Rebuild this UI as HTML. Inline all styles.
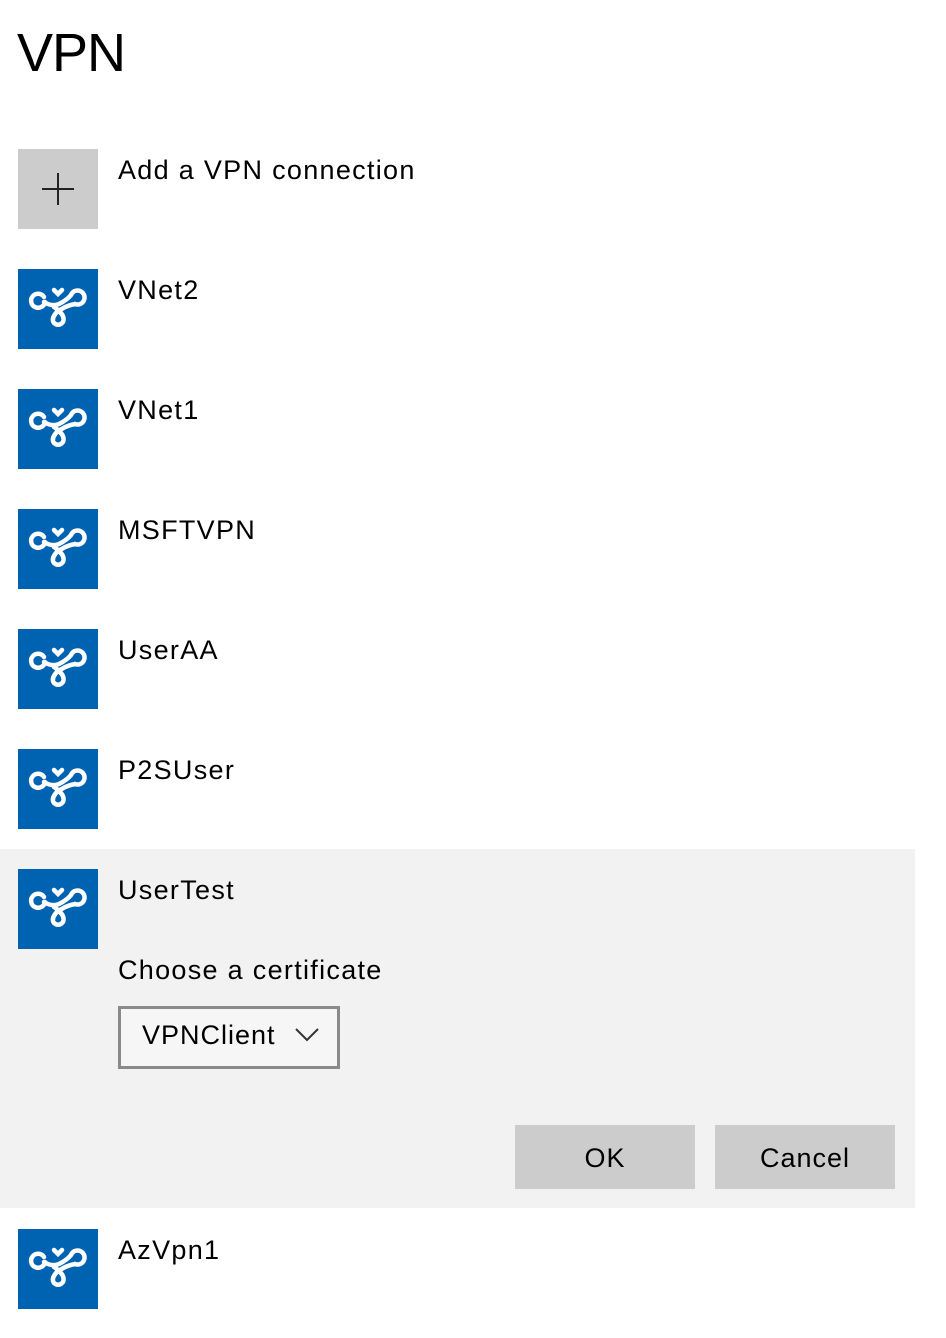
<!DOCTYPE html>
<html><head><style>
body{margin:0;width:946px;height:1338px;background:#fff;font-family:"Liberation Sans",sans-serif;color:#000;position:relative;overflow:hidden}
.a{position:absolute}
.ic{position:absolute;left:18px;width:80px;height:80px;background:#0063b1}
.t{position:absolute;left:118px;font-size:27px;letter-spacing:1.3px}
.btn{position:absolute;top:1125px;width:180px;height:64px;background:#ccc;font-size:27px;text-align:center;line-height:66px;letter-spacing:1px}
</style></head><body>
<div class="a" style="left:17px;top:22px;font-size:54px;letter-spacing:-1px">VPN</div>
<div class="a" style="left:18px;top:149px;width:80px;height:80px;background:#ccc"></div>
<div class="a" style="left:42px;top:188px;width:32px;height:2px;background:#222"></div>
<div class="a" style="left:57px;top:173px;width:2px;height:32px;background:#222"></div>
<div class="t" style="top:155px">Add a VPN connection</div>
<div class="a" style="left:0;top:849px;width:915px;height:359px;background:#f2f2f2"></div>
<svg width="0" height="0" style="position:absolute"><defs><g id="v" fill="none" stroke="#fff" stroke-width="4.5" stroke-linecap="round">
<path d="M27 33 A7 7 0 1 1 26 28"/>
<path d="M26 33 Q34 38 41 35 Q49 31 53 26"/>
<path d="M53 26 A7 7 0 1 1 57 35"/>
<path d="M57 35 Q46 37 38 44 Q33 50 36 54 Q41 58 45 53 Q47 48 42 43 Q38 39 36 38"/>
<path d="M36 21 L40 25 L44 21"/></g></defs></svg>
<div class="ic" style="top:269px"><svg width="80" height="80"><use href="#v"/></svg></div>
<div class="t" style="top:275px">VNet2</div>
<div class="ic" style="top:389px"><svg width="80" height="80"><use href="#v"/></svg></div>
<div class="t" style="top:395px">VNet1</div>
<div class="ic" style="top:509px"><svg width="80" height="80"><use href="#v"/></svg></div>
<div class="t" style="top:515px">MSFTVPN</div>
<div class="ic" style="top:629px"><svg width="80" height="80"><use href="#v"/></svg></div>
<div class="t" style="top:635px">UserAA</div>
<div class="ic" style="top:749px"><svg width="80" height="80"><use href="#v"/></svg></div>
<div class="t" style="top:755px">P2SUser</div>
<div class="ic" style="top:869px"><svg width="80" height="80"><use href="#v"/></svg></div>
<div class="t" style="top:875px">UserTest</div>
<div class="t" style="top:955px">Choose a certificate</div>
<div class="a" style="left:118px;top:1006px;width:216px;height:57px;border:3px solid #8a8a8a;background:#f6f6f6"></div>
<div class="a" style="left:142px;top:1020px;font-size:27px;letter-spacing:1px">VPNClient</div>
<svg class="a" style="left:294px;top:1026px" width="28" height="18"><path d="M2 3 L13 14 L24 3" fill="none" stroke="#333" stroke-width="2"/></svg>
<div class="btn" style="left:515px">OK</div>
<div class="btn" style="left:715px">Cancel</div>
<div class="ic" style="top:1229px"><svg width="80" height="80"><use href="#v"/></svg></div>
<div class="t" style="top:1235px">AzVpn1</div>
</body></html>
